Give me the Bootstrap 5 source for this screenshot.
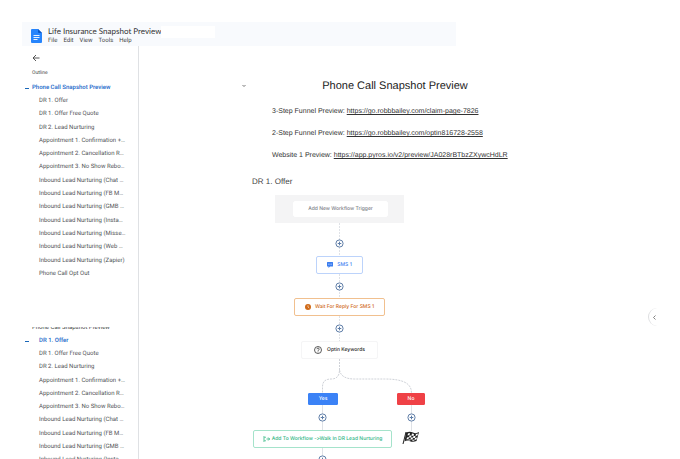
<!DOCTYPE html>
<html lang="en">
<head>
<meta charset="utf-8">
<meta name="viewport" content="width=device-width, initial-scale=1">
<title>Life Insurance Snapshot Preview</title>
<link href="https://cdn.jsdelivr.net/npm/bootstrap@5.3.0/dist/css/bootstrap.min.css" rel="stylesheet">
<style>
  body { font-family: Roboto, "Open Sans", sans-serif; color: #444746; background: #fff; text-rendering: geometricPrecision; }
  svg { display: block; }
  button { font-family: inherit; text-rendering: inherit; }
  .shell { height: 100vh; padding: 22px 0 0 22px; }
  .topbar { width: 66%; height: 24px; background: #f8fafd; padding-left: 9px; }
  .doc-icon { margin-top: 7px; }
  .doc-heading { padding: 4px 0 0 6px; }
  .doc-title { font-family: Lato, Roboto, sans-serif; font-size: 8px; line-height: 10px; color: #333; }
  .menu-item { font-size: 6px; line-height: 8px; color: #444; }
  .menus { gap: 6px; margin-top: 1px; }
  .title-field { width: 54px; height: 12px; }
  .outline-pane { width: 117px; border-right: 1px solid #dfe1e4; font-size: 6px; line-height: 8px; }
  .back { margin: 8px 0 0 10px; }
  .outline-label { margin: 7px 0 0 10px; font-size: 5px; }
  .outline-head { margin-top: 7px; padding-left: 3px; gap: 3px; }
  .outline-list { margin-top: 5px; height: 181px; padding-left: 17px; }
  .outline-list a, .outline-head a { color: #505356; }
  .dash { width: 4px; height: 1px; background: #1967b8; }
  .outline-head .active, .outline-list .active { color: #1967c9; font-weight: 500; }
  .second { margin-top: 49px; height: 134px; }
  .second .outline-list { margin-top: 0; height: 127px; padding-left: 7px; }
  .second .dash { margin-top: 4px; }
  .second .outline-head { margin-top: 5px; }
  .cut { height: 5px; padding-left: 10px; }
  .doc { width: 300px; margin: 33px 0 0 101px; font-family: "Liberation Sans", Arial, sans-serif; color: #333; }
  .doc h1 { font-size: 11px; line-height: 14px; margin: 0; padding-left: 4px; color: #222; }
  .chevron { margin-left: 2px; }
  .previews { font-size: 7px; line-height: 8px; gap: 14px; margin: 15px 0 0 32px; }
  .previews a { color: #333; }
  .doc h2 { font-size: 8px; line-height: 10px; margin: 17px 0 0 12px; color: #444; }
  .canvas { height: 280px; margin-top: 3px; font-family: Inter, Roboto, sans-serif; }
  .node { position: absolute; font-size: 5px; line-height: 8px; font-weight: 500; font-variant-ligatures: none; background: #fff; border: 1px solid; border-radius: 2px; padding: 0; gap: 4px; height: 18px; }
  .zone { position: absolute; left: 35px; top: 5px; width: 129px; height: 28px; background: #f4f4f5; }
  .trigger { left: 53px; top: 11px; width: 95px; height: 16px; border-color: #fff; color: #7d8086; }
  .sms { left: 76px; top: 66px; width: 47px; border-color: #bcd3fb; color: #3b7df0; }
  .wait { left: 54px; top: 108px; width: 91px; border-color: #f1c08f; color: #d06a18; }
  .optin { left: 61px; top: 151px; width: 77px; border-color: #f5f5f6; color: #222; gap: 5px; }
  .yes { left: 68px; top: 203px; width: 30px; height: 12px; color: #fff; background: #3b82f6; border-color: #3b82f6; border-radius: 1px; }
  .no { left: 157px; top: 203px; width: 28px; height: 12px; color: #fff; background: #ef4146; border-color: #ef4146; border-radius: 1px; }
  .add { left: 13px; top: 240px; width: 139px; border-color: #a5e3cb; color: #2bb47f; gap: 2px; }
  .collapse-tab { position: absolute; right: 21px; top: 308px; width: 11px; height: 18px; border: 0; border-left: 1px solid #dedfe1; border-radius: 10px 0 0 10px; background: #fff; padding: 0; }
</style>
<script src="https://cdn.jsdelivr.net/npm/bootstrap@5.3.0/dist/js/bootstrap.bundle.min.js"></script>
</head>
<body>
<div class="shell d-flex flex-column overflow-hidden position-relative">
  <header class="topbar d-flex flex-shrink-0">
    <svg class="doc-icon" width="11" height="14" viewBox="0 0 11 14" aria-hidden="true"><path d="M1 0h6l4 4v9a1 1 0 0 1-1 1H1a1 1 0 0 1-1-1V1a1 1 0 0 1 1-1z" fill="#2684fc"/><path d="M7 0l4 4H8a1 1 0 0 1-1-1z" fill="#0b57c4"/><path d="M2.500 6.500h6M2.500 8.500h6M2.500 10.500h4" stroke="#fff" stroke-width=".9"/></svg>
    <div class="doc-heading">
      <div class="doc-title text-nowrap">Life Insurance Snapshot Preview</div>
      <nav class="menus d-flex" aria-label="Document menu">
        <button class="menu-item border-0 bg-transparent p-0">File</button>
        <button class="menu-item border-0 bg-transparent p-0">Edit</button>
        <button class="menu-item border-0 bg-transparent p-0">View</button>
        <button class="menu-item border-0 bg-transparent p-0">Tools</button>
        <button class="menu-item border-0 bg-transparent p-0">Help</button>
      </nav>
    </div>
    <div class="title-field bg-white mt-1"></div>
  </header>
  <div class="d-flex flex-grow-1">
    <aside class="outline-pane flex-shrink-0">
      <button class="back d-block border-0 bg-transparent p-0" aria-label="Close outline"><svg width="8" height="8" viewBox="0 0 8 8" fill="none" stroke="#444" stroke-width="0.9"><path d="M7.500 4H1M4 1L1 4l3 3"/></svg></button>
      <div class="outline-label">Outline</div>
      <div class="outline-head d-flex align-items-center text-nowrap"><span class="dash"></span><a href="#top" class="active text-decoration-none">Phone Call Snapshot Preview</a></div>
      <nav class="outline-list d-flex flex-column justify-content-between text-nowrap" aria-label="Outline">
        <a class="text-decoration-none" href="#offer">DR 1. Offer</a>
        <a class="text-decoration-none" href="#offer">DR 1. Offer Free Quote</a>
        <a class="text-decoration-none" href="#offer">DR 2. Lead Nurturing</a>
        <a class="text-decoration-none" href="#offer">Appointment 1. Confirmation +…</a>
        <a class="text-decoration-none" href="#offer">Appointment 2. Cancellation R…</a>
        <a class="text-decoration-none" href="#offer">Appointment 3. No Show Rebo…</a>
        <a class="text-decoration-none" href="#offer">Inbound Lead Nurturing (Chat …</a>
        <a class="text-decoration-none" href="#offer">Inbound Lead Nurturing (FB M…</a>
        <a class="text-decoration-none" href="#offer">Inbound Lead Nurturing (GMB …</a>
        <a class="text-decoration-none" href="#offer">Inbound Lead Nurturing (Insta…</a>
        <a class="text-decoration-none" href="#offer">Inbound Lead Nurturing (Misse…</a>
        <a class="text-decoration-none" href="#offer">Inbound Lead Nurturing (Web …</a>
        <a class="text-decoration-none" href="#offer">Inbound Lead Nurturing (Zapier)</a>
        <a class="text-decoration-none" href="#offer">Phone Call Opt Out</a>
      </nav>
      <div class="second overflow-hidden">
        <div class="cut d-flex align-items-end overflow-hidden text-nowrap"><span>Phone Call Snapshot Preview</span></div>
        <div class="outline-head d-flex align-items-start">
          <span class="dash"></span>
          <nav class="outline-list d-flex flex-column justify-content-between text-nowrap" aria-label="Outline, scrolled">
            <a class="active text-decoration-none" href="#offer">DR 1. Offer</a>
            <a class="text-decoration-none" href="#offer">DR 1. Offer Free Quote</a>
            <a class="text-decoration-none" href="#offer">DR 2. Lead Nurturing</a>
            <a class="text-decoration-none" href="#offer">Appointment 1. Confirmation +…</a>
            <a class="text-decoration-none" href="#offer">Appointment 2. Cancellation R…</a>
            <a class="text-decoration-none" href="#offer">Appointment 3. No Show Rebo…</a>
            <a class="text-decoration-none" href="#offer">Inbound Lead Nurturing (Chat …</a>
            <a class="text-decoration-none" href="#offer">Inbound Lead Nurturing (FB M…</a>
            <a class="text-decoration-none" href="#offer">Inbound Lead Nurturing (GMB …</a>
            <a class="text-decoration-none" href="#offer">Inbound Lead Nurturing (Insta…</a>
          </nav>
        </div>
      </div>
    </aside>
    <main class="doc flex-shrink-0" id="top">
      <div class="d-flex align-items-center">
        <svg class="chevron" width="4" height="4" viewBox="0 0 4 4" fill="none" stroke="#555" stroke-width="0.8" aria-hidden="true"><path d="M0.500 1l1.500 1.500L3.500 1"/></svg>
        <h1 class="flex-grow-1 text-center fw-normal">Phone Call Snapshot Preview</h1>
      </div>
      <div class="previews d-flex flex-column text-nowrap">
        <div>3-Step Funnel Preview: <a href="#claim">https://go.robbbailey.com/claim-page-7826</a></div>
        <div>2-Step Funnel Preview: <a href="#optin">https://go.robbbailey.com/optin816728-2558</a></div>
        <div>Website 1 Preview: <a href="#site">https://app.pyros.io/v2/preview/JA028rBTbzZXywcHdLR</a></div>
      </div>
      <h2 class="fw-normal" id="offer">DR 1. Offer</h2>
      <div class="canvas position-relative text-nowrap">
        <div class="zone"></div>
        <svg class="position-absolute top-0 start-0" width="200" height="280" viewBox="0 0 200 280" fill="none" aria-hidden="true">
          <g stroke="#dfe2e7" stroke-width="1">
            <path d="M99.500 33V151" stroke-dasharray="2 1"/>
            <path d="M99.500 169v11c0 6-3 9-8 9-7 0-9 3-9 8v6M99.500 180c1 6 6 9 15 9h30c20 0 27 5 27 14" stroke="#cfd2d8" stroke-dasharray="2 1"/>
            <path d="M82.500 215v65M171.500 215v26"/>
          </g>
          <g stroke="#5f7ea8" stroke-width="1" fill="#fff">
            <g id="plus"><circle cx="99.500" cy="53.500" r="3.600"/><path d="M97.700 53.500h3.600M99.500 51.700v3.600"/></g>
            <use href="#plus" y="43"/><use href="#plus" y="85"/><use href="#plus" x="-17" y="174"/><use href="#plus" x="72" y="174"/><use href="#plus" x="-17" y="216"/>
          </g>
          <g transform="translate(163 242)"><path d="M3 0.500Q7 -1 10 0.500T16 0L13.500 9Q10 10.500 7 9.200T1.500 9.500z" fill="#222"/><path d="M3 0L0 12" stroke="#222"/><g fill="#fff"><path d="M5 1.500l2-.5-.5 2-2 .5zM9 1.500l2 .5-.5 2-2-.5zM13 2l2-.5-.5 2-2 .5zM6.500 3.500l2 0-.5 2h-2zM10.500 4l2 0-.5 2h-2zM4 5.500l2-.5-.5 2-2 .5zM8 5.500h2l-.5 2h-2zM12 6l2-.5-.5 2-2 .5zM5.500 7.500h2l-.3 1h-2zM9.500 7.800h2l-.3 1h-2z"/></g></g>
        </svg>
        <button class="node trigger d-flex align-items-center justify-content-center">Add New Workflow Trigger</button>
        <button class="node sms d-flex align-items-center justify-content-center"><svg width="6" height="6" viewBox="0 0 6 6"><path d="M.5 0h5q.5 0 .5.500v3.500q0 .5-.5.5H3L1.500 6V4.500h-1Q0 4.500 0 4V.5Q0 0 .5 0z" fill="#3b7df0"/><path d="M1.300 2.200h3.400" stroke="#fff" stroke-width=".7" stroke-dasharray=".8 .5"/></svg>SMS 1</button>
        <button class="node wait d-flex align-items-center justify-content-center"><svg width="6" height="6" viewBox="0 0 6 6"><circle cx="3" cy="3" r="3" fill="#d06a18"/><path d="M3 1.300V3l1.200 1" stroke="#fff" stroke-width=".6" fill="none"/></svg>Wait For Reply For SMS 1</button>
        <button class="node optin d-flex align-items-center justify-content-center"><svg width="8" height="8" viewBox="0 0 8 8" fill="none" stroke="#333" stroke-width=".8"><circle cx="4" cy="4" r="3.500"/><path d="M2.900 3.200c0-1.600 2.300-1.500 2.300 0 0 .9-1.200.8-1.200 1.700M4 5.500v.8"/></svg>Optin Keywords</button>
        <button class="node yes d-flex align-items-center justify-content-center">Yes</button>
        <button class="node no d-flex align-items-center justify-content-center">No</button>
        <button class="node add d-flex align-items-center justify-content-center"><svg width="7" height="6" viewBox="0 0 7 6" fill="none" stroke="#2bb47f" stroke-width=".8"><path d="M0 1h2.500L.5 3l2 2H0M3.500 3h3M5.200 1.500L6.700 3 5.200 4.500"/></svg>Add To Workflow -&gt;Walk In DR Lead Nurturing</button>
      </div>
    </main>
  </div>
  <button class="collapse-tab d-flex align-items-center justify-content-center" aria-label="Show side panel"><svg width="3" height="5" viewBox="0 0 3 5" fill="none" stroke="#666" stroke-width=".8"><path d="M2.500 .5l-2 2 2 2"/></svg></button>
</div>
</body>
</html>
